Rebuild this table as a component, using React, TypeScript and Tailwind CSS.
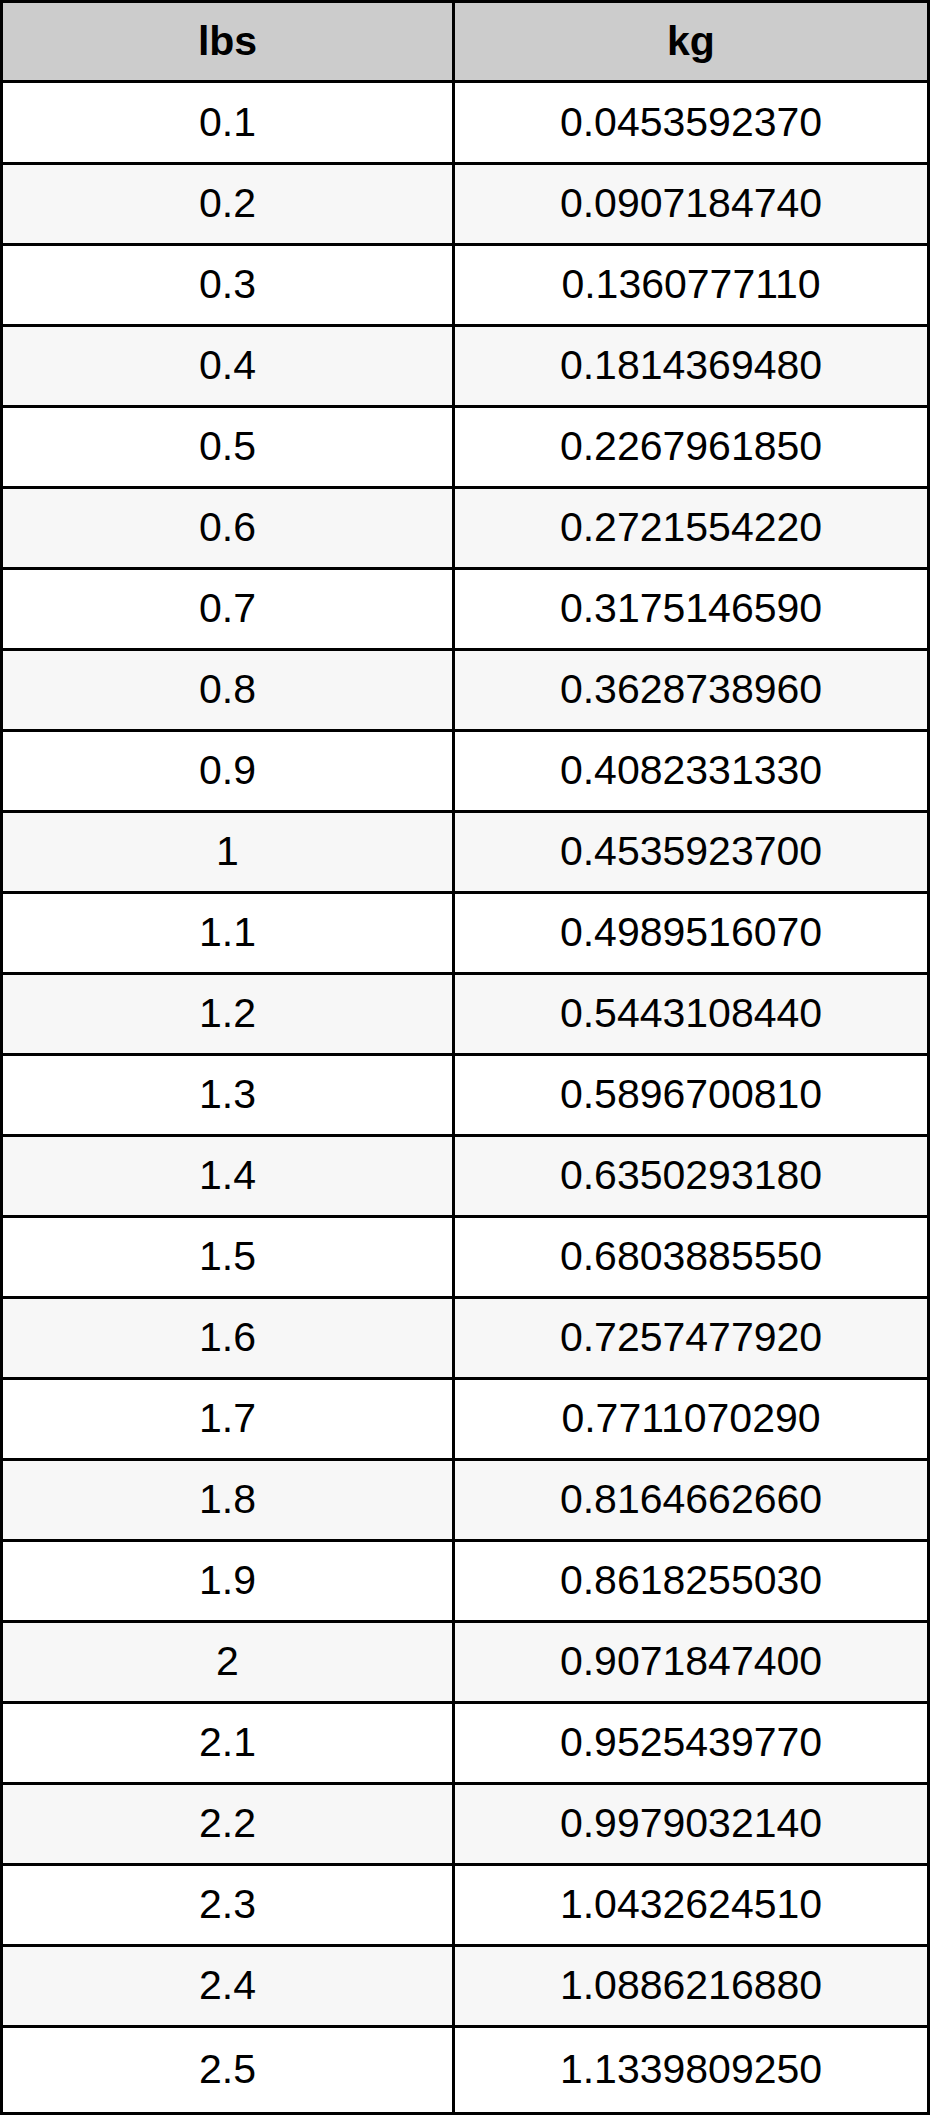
const rows: [string, string][] = [
  ["0.1", "0.0453592370"],
  ["0.2", "0.0907184740"],
  ["0.3", "0.1360777110"],
  ["0.4", "0.1814369480"],
  ["0.5", "0.2267961850"],
  ["0.6", "0.2721554220"],
  ["0.7", "0.3175146590"],
  ["0.8", "0.3628738960"],
  ["0.9", "0.4082331330"],
  ["1", "0.4535923700"],
  ["1.1", "0.4989516070"],
  ["1.2", "0.5443108440"],
  ["1.3", "0.5896700810"],
  ["1.4", "0.6350293180"],
  ["1.5", "0.6803885550"],
  ["1.6", "0.7257477920"],
  ["1.7", "0.7711070290"],
  ["1.8", "0.8164662660"],
  ["1.9", "0.8618255030"],
  ["2", "0.9071847400"],
  ["2.1", "0.9525439770"],
  ["2.2", "0.9979032140"],
  ["2.3", "1.0432624510"],
  ["2.4", "1.0886216880"],
  ["2.5", "1.1339809250"],
];

// first and last rows are a little taller in the screenshot
const rowHeight = (i: number) =>
  i === 0 ? "h-[82px]" : i === rows.length - 1 ? "h-[87px]" : "h-[81px]";

export default function App() {
  return (
    <div className="w-[930px] bg-white font-['Liberation_Sans',Arial,sans-serif] text-[41px] text-black">
      <div className="border-[3px] border-black">
        {/* header */}
        <div className="flex h-[77px] bg-[#cccccc] font-bold">
          <div className="flex w-[449px] items-center justify-center border-r-[3px] border-black box-content">lbs</div>
          <div className="flex flex-1 items-center justify-center">kg</div>
        </div>

        {rows.map(([lbs, kg], i) => (
          <div
            key={lbs}
            className={`flex ${rowHeight(i)} border-t-[3px] border-black ${i % 2 === 1 ? "bg-[#f7f7f7]" : "bg-white"}`}
          >
            <div className="flex w-[449px] items-center justify-center border-r-[3px] border-black box-content">{lbs}</div>
            <div className="flex flex-1 items-center justify-center">{kg}</div>
          </div>
        ))}
      </div>
    </div>
  );
}
